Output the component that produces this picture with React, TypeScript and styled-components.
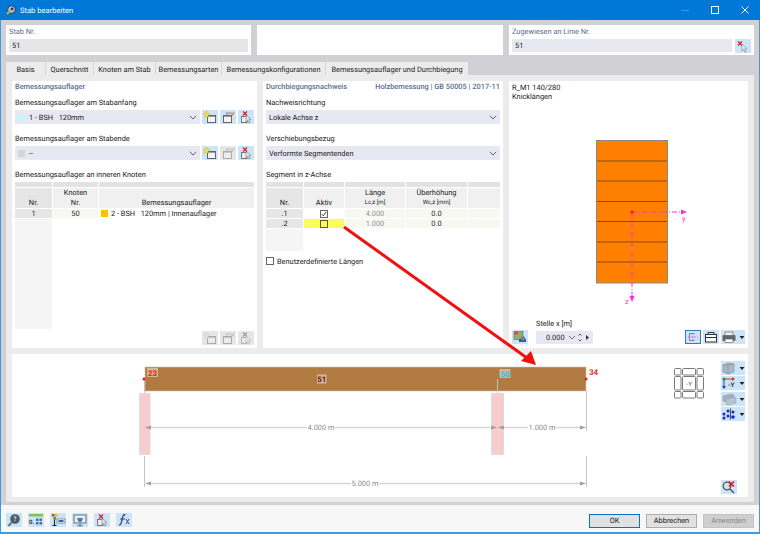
import React from 'react';
import styled, { createGlobalStyle, css } from 'styled-components';

const GlobalStyle = createGlobalStyle`
  html, body { margin: 0; padding: 0; background: #fff; overflow: hidden; }
  * { box-sizing: border-box; }
`;

const FONT = `Roboto, 'Noto Sans', 'Liberation Sans', sans-serif`;

const Window = styled.div`
  position: relative;
  width: 760px;
  height: 534px;
  display: flex;
  flex-direction: column;
  border: 1px solid #3f9be0;
  border-top: 0;
  border-bottom-width: 2px;
  font-family: ${FONT};
  font-size: 7.4px;
  text-rendering: geometricPrecision;
  color: #222;
  background: #f7f7f7;
`;

const TitleBar = styled.div`
  height: 20px;
  flex: none;
  margin: 0 -1px;
  padding: 0 0 0 6px;
  display: flex;
  align-items: center;
  gap: 4px;
  background: #0078d7;
  color: #fff;
  font-size: 7.6px;
`;

const WindowControls = styled.div`
  margin-left: auto;
  display: flex;
  align-items: center;
  height: 100%;
`;

const WindowControl = styled.span`
  width: 30px;
  height: 100%;
  display: flex;
  align-items: center;
  justify-content: center;
`;

const Main = styled.div`
  height: 485px;
  flex: none;
  padding: 5px 5px 3px;
  display: flex;
  flex-direction: column;
  background: #d1d1d5;
`;

const HeaderRow = styled.div`
  display: grid;
  grid-template-columns: 245px 246px 245px;
  column-gap: 6px;
  height: 30px;
  margin-bottom: 7px;
`;

const HeaderCard = styled.div`
  background: #fff;
  padding: 1px 3px 0;
`;

const HeaderLabel = styled.div`
  color: #5b6c8e;
  line-height: 12px;
  height: 13px;
`;

const HeaderFieldRow = styled.div`
  display: flex;
  gap: 3px;
`;

const HeaderField = styled.div<{ $disabled?: boolean }>`
  flex: 1;
  height: 13px;
  line-height: 13px;
  padding-left: 3px;
  background: ${(p) => (p.$disabled ? '#e6e6e6' : '#e8e8f2')};
`;

const TabStrip = styled.div`
  height: 13px;
  display: flex;
  align-items: flex-start;
`;

const Tab = styled.div<{ $width: number; $active?: boolean }>`
  width: ${(p) => p.$width}px;
  height: 13px;
  line-height: 15px;
  text-align: center;
  white-space: nowrap;
  background: #ececec;
  color: #222;
  ${(p) =>
    !p.$active &&
    css`
      border-right: 1px solid #d9d9dc;
    `}
`;

const Frame = styled.div`
  height: 427px;
  flex: none;
  padding: 6px;
  display: flex;
  flex-direction: column;
  gap: 6px;
  background: #ececec;
`;

const TopRow = styled.div`
  height: 267px;
  flex: none;
  display: grid;
  grid-template-columns: 245px 240px 239px;
  column-gap: 6px;
`;

const Panel = styled.div`
  background: #fff;
  padding: 0 3px;
  display: flex;
  flex-direction: column;
  min-width: 0;
`;

const PanelTitleRow = styled.div`
  height: 12px;
  line-height: 12px;
  display: flex;
  justify-content: space-between;
  white-space: nowrap;
  color: #5b6c8e;
  font-weight: 500;
`;

const FieldLabel = styled.div<{ $first?: boolean }>`
  height: 12px;
  line-height: 12px;
  margin-top: ${(p) => (p.$first ? 4 : 9)}px;
  margin-bottom: 1px;
`;

const SelectRow = styled.div`
  display: flex;
  gap: 2px;
`;

const Select = styled.div`
  flex: 1;
  height: 14px;
  display: flex;
  align-items: center;
  gap: 4px;
  padding: 0 3px;
  background: #e8e8f2;
`;

const Swatch = styled.span<{ $color: string }>`
  width: 7px;
  height: 7px;
  flex: none;
  background: ${(p) => p.$color};
`;

const SelectText = styled.span`
  flex: 1;
  white-space: pre;
`;

const IconButton = styled.div<{ $disabled?: boolean; $wide?: boolean; $selected?: boolean }>`
  width: ${(p) => (p.$wide ? 24 : 16)}px;
  height: 14px;
  flex: none;
  display: flex;
  align-items: center;
  justify-content: ${(p) => (p.$wide ? 'flex-start' : 'center')};
  background: ${(p) => (p.$disabled ? '#e6e6e6' : '#cce4f7')};
  ${(p) =>
    p.$selected &&
    css`
      outline: 1px solid #2f7cb8;
      outline-offset: -1px;
    `}
  ${(p) =>
    p.$disabled &&
    css`
      svg {
        filter: grayscale(1) opacity(0.45);
      }
    `}
`;

const TableGrid = styled.div<{ $columns: string }>`
  display: grid;
  grid-template-columns: ${(p) => p.$columns};
  grid-auto-rows: min-content;
  gap: 1px;
`;

const TopCell = styled.div`
  height: 5px;
  background: #e2e2e2;
`;

const HeadCell = styled.div<{ $stub?: boolean }>`
  height: 20px;
  display: flex;
  flex-direction: column;
  align-items: center;
  justify-content: flex-end;
  line-height: 10px;
  background: ${(p) => (p.$stub ? '#e6e6e6' : '#f0f0f0')};
`;

const SmallUnit = styled.span`
  font-size: 6px;
`;

const BodyCell = styled.div<{ $tone?: 'stub' | 'readonly' | 'white' | 'yellow'; $muted?: boolean; $left?: boolean }>`
  height: 9px;
  line-height: 9px;
  display: flex;
  align-items: center;
  justify-content: ${(p) => (p.$left ? 'flex-start' : 'center')};
  gap: 3px;
  padding-left: ${(p) => (p.$left ? 2 : 0)}px;
  white-space: pre;
  color: ${(p) => (p.$muted ? '#8f8f8f' : '#222')};
  background: ${(p) =>
    p.$tone === 'stub'
      ? '#e6e6e6'
      : p.$tone === 'yellow'
      ? '#fbfb5a'
      : p.$tone === 'readonly'
      ? '#f8f8f3'
      : '#fff'};
`;

const StubFiller = styled.div<{ $height: number }>`
  height: ${(p) => p.$height}px;
  background: #f5f5f5;
`;

const CheckBox = styled.span<{ $dark?: boolean }>`
  width: 8px;
  height: 8px;
  flex: none;
  display: inline-flex;
  border: 1px solid ${(p) => (p.$dark ? '#5c5c2a' : '#666')};
`;

const CheckRow = styled.div`
  display: flex;
  align-items: center;
  gap: 3px;
  margin-top: 4px;
  height: 12px;
`;

const BottomTools = styled.div`
  margin-top: auto;
  margin-bottom: 3px;
  display: flex;
  justify-content: flex-end;
  gap: 2px;
`;

const SectionHeading = styled.div`
  margin-top: 3px;
  line-height: 8.5px;
  color: #222;
`;

const SectionDrawing = styled.svg`
  display: block;
  width: 239px;
  height: 214px;
  margin: 3px -3px 0;
  flex: none;
`;

const SectionFooter = styled.div`
  display: flex;
  align-items: flex-end;
  gap: 8px;
`;

const StelleBox = styled.div`
  width: 57px;
`;

const StelleLabel = styled.div`
  height: 13px;
  line-height: 12px;
`;

const Spinner = styled.div`
  height: 13px;
  display: flex;
  align-items: center;
  padding-left: 10px;
  background: #e8e8f2;
`;

const SectionTools = styled.div`
  margin-left: auto;
  display: flex;
  gap: 2px;
`;

const DiagramPanel = styled.div`
  position: relative;
  height: 143px;
  flex: none;
  background: #fff;
`;

const DiagramCanvas = styled.svg`
  display: block;
  width: 736px;
  height: 143px;
`;

const ViewTools = styled.div`
  position: absolute;
  top: 7px;
  right: 3px;
  display: flex;
  flex-direction: column;
  gap: 1.3px;
`;

const ClearTool = styled.div`
  position: absolute;
  right: 11px;
  bottom: 3px;
`;

const Footer = styled.div`
  flex: 1;
  display: flex;
  align-items: flex-start;
  padding: 8px 0 0 5px;
`;

const FooterTools = styled.div`
  display: flex;
  gap: 6px;
`;

const FooterButtons = styled.div`
  margin-left: auto;
  margin-right: 5px;
  margin-top: 1px;
  display: flex;
  gap: 6px;
`;

const DialogButton = styled.div<{ $variant?: 'primary' | 'disabled' }>`
  width: 51px;
  height: 14px;
  line-height: 12px;
  text-align: center;
  background: ${(p) => (p.$variant === 'disabled' ? '#cfcfcf' : '#e1e1e1')};
  color: ${(p) => (p.$variant === 'disabled' ? '#8a8a8a' : '#222')};
  border: 1px solid
    ${(p) => (p.$variant === 'primary' ? '#0a72c4' : p.$variant === 'disabled' ? '#c4c4c4' : '#adadad')};
`;

const ArrowOverlay = styled.svg`
  position: absolute;
  left: -1px;
  top: 0;
  width: 760px;
  height: 534px;
  pointer-events: none;
`;

const Icon: React.FC<{ children: React.ReactNode; w?: number }> = ({ children, w = 16 }) => (
  <svg width={w} height={14} viewBox={`0 0 ${w} 14`}>
    {children}
  </svg>
);

const Dropdown = () => <path d="M18.5 6h5l-2.5 3z" fill="#222" />;

const NewIcon = () => (
  <Icon>
    <rect x="5.500" y="5.500" width="8" height="7" fill="#f4f4f4" stroke="#666" />
    <rect x="5" y="5" width="9" height="1.600" fill="#666" />
    <path d="M4.5 1l1 2.2 2.3.3-1.7 1.6.5 2.3-2.1-1.2-2.1 1.2.5-2.3L1.2 3.500l2.3-.3z" fill="#f5e23a" stroke="#b9a520" strokeWidth=".4" />
  </Icon>
);

const EditIcon = () => (
  <Icon>
    <rect x="3.500" y="5.500" width="8" height="7" fill="#f4f4f4" stroke="#666" />
    <rect x="3" y="5" width="9" height="1.600" fill="#666" />
    <path d="M6 3h6M7 3v2" stroke="#777" strokeWidth=".8" />
    <path d="M11 5l2.500-3 1.200 1-2.500 3z" fill="#c98a4a" />
  </Icon>
);

const DeleteIcon = () => (
  <Icon>
    <rect x="3.500" y="6.500" width="5.500" height="6" fill="#eee" stroke="#777" />
    <path d="M8 5l5 4.500-2.200.3 1.200 2.400-1.200.6-1.200-2.400-1.600 1.500z" fill="#e8e8e8" stroke="#777" strokeWidth=".6" />
    <path d="M5 1.500l4 4M9 1.500l-4 4" stroke="#d8202a" strokeWidth="1.200" />
  </Icon>
);

const PickIcon = () => (
  <Icon>
    <path d="M3 2.500l4 4M7 2.500l-4 4" stroke="#d8202a" strokeWidth="1.300" />
    <path d="M7 5l5 4.600-2.300.3 1.400 2.600-1.300.6-1.300-2.700-1.600 1.600z" fill="#e9e9e9" stroke="#888" strokeWidth=".6" />
  </Icon>
);

const RenderSettingsIcon = () => (
  <Icon>
    <rect x="2" y="1.500" width="9" height="8" fill="#8fb06c" stroke="#666" strokeWidth=".6" />
    <rect x="2" y="1.500" width="4" height="3" fill="#c9573e" />
    <path d="M7 9h7v3H7z" fill="#2c5f9a" />
    <circle cx="11" cy="8.500" r="2.200" fill="#6a7e96" />
  </Icon>
);

const SectionViewIcon = () => (
  <Icon>
    <path d="M4.500 3.500h5M4.500 3.500v7M4.500 10.500h5" fill="none" stroke="#8a5a70" strokeWidth=".8" />
    <path d="M3 7h10M8 3v8" stroke="#e04fc0" strokeWidth=".7" strokeDasharray="2 1" />
  </Icon>
);

const TableIcon = () => (
  <Icon>
    <rect x="2.500" y="4.500" width="11" height="7.500" fill="#fff" stroke="#333" />
    <path d="M5 4.500V2.500h6v2" fill="none" stroke="#333" />
    <path d="M2.500 7.500h11" stroke="#333" />
  </Icon>
);

const PrintIcon = () => (
  <Icon w={24}>
    <rect x="1.500" y="5" width="13" height="6" rx="1" fill="#666" />
    <rect x="4" y="2" width="8" height="3.500" fill="#eee" stroke="#555" strokeWidth=".6" />
    <rect x="4" y="9" width="8" height="3.500" fill="#fff" stroke="#555" strokeWidth=".6" />
    <Dropdown />
  </Icon>
);

const BoxViewIcon = () => (
  <Icon w={24}>
    <path d="M2 4l5-2 6 1v8l-6 2-5-2z" fill="#a9b7c6" stroke="#7d8b99" strokeWidth=".6" />
    <path d="M7 4v9M2 4l5 0 6-1" stroke="#7d8b99" strokeWidth=".6" fill="none" />
    <Dropdown />
  </Icon>
);

const AxesIcon = () => (
  <Icon w={24}>
    <circle cx="3" cy="3" r="1.600" fill="#2a9a3a" />
    <path d="M3 3h9" stroke="#c8342a" strokeWidth="1" />
    <path d="M11 1l3 2-3 2z" fill="#c8342a" />
    <path d="M3 4v7" stroke="#1c3fc0" strokeWidth="1" />
    <path d="M1 10l2 3 2-3z" fill="#1c3fc0" />
    <text x="7" y="11" fontSize="6.500" fontWeight="700" fill="#333" fontFamily={FONT}>-Y</text>
    <Dropdown />
  </Icon>
);

const LayersIcon = () => (
  <Icon w={24}>
    <path d="M2 4l8-2 3 1v5l-8 2-3-1z" fill="#a3b1bf" stroke="#8c99a6" strokeWidth=".5" />
    <path d="M5 7l8-2 2 1v5l-8 2-2-1z" fill="#b7c3cf" stroke="#8c99a6" strokeWidth=".5" />
    <Dropdown />
  </Icon>
);

const LoadsIcon = () => (
  <Icon w={24}>
    <g fill="#1428c8">
      <circle cx="3" cy="7" r="1.500" />
      <circle cx="3" cy="11" r="1.500" />
      <circle cx="7" cy="4" r="1.500" />
      <circle cx="7" cy="9" r="1.500" />
      <circle cx="12" cy="5" r="1.500" />
      <circle cx="12" cy="10" r="1.800" />
    </g>
    <path d="M9.500 1.500v11" stroke="#555" strokeWidth="1.200" />
    <Dropdown />
  </Icon>
);

const ClearIcon = () => (
  <Icon>
    <circle cx="6" cy="6" r="3.800" fill="none" stroke="#555" strokeWidth="1.300" />
    <path d="M9 9l4 4" stroke="#555" strokeWidth="1.400" />
    <path d="M8 1.500l5 5M13 1.500l-5 5" stroke="#e01020" strokeWidth="1.500" />
  </Icon>
);

const HelpIcon = () => (
  <Icon>
    <circle cx="9" cy="6" r="4.800" fill="#4a5c6a" />
    <path d="M5.500 9.500L2.500 13" stroke="#4a5c6a" strokeWidth="1.800" />
    <text x="7.300" y="8.300" fontSize="6.500" fill="#dfe8ef" fontWeight="700" fontFamily={FONT}>?</text>
  </Icon>
);

const ValuesIcon = () => (
  <Icon>
    <rect x="1" y="1" width="14" height="2.500" fill="#7cc35e" />
    <text x="1" y="11" fontSize="6" fontWeight="700" fill="#333" fontFamily={FONT}>0.</text>
    <rect x="8" y="5.500" width="2.500" height="2.500" fill="#3f6fb0" />
    <rect x="11.500" y="5.500" width="2.500" height="2.500" fill="#3f6fb0" />
    <rect x="8" y="9" width="2.500" height="2.500" fill="#3f6fb0" />
    <rect x="11.500" y="9" width="2.500" height="2.500" fill="#3f6fb0" />
  </Icon>
);

const ObjectsIcon = () => (
  <Icon>
    <rect x="2" y="1" width="2.500" height="2.500" fill="#d83a2a" />
    <rect x="5" y="1" width="2.500" height="2.500" fill="#e0c020" />
    <rect x="3.500" y="4" width="2.500" height="2.500" fill="#3aa040" />
    <path d="M4.500 6.500v6M2.500 12.500h4" stroke="#222" strokeWidth="1.100" />
    <rect x="7" y="6" width="8" height="4" fill="#fff" stroke="#555" strokeWidth=".6" />
    <rect x="8.500" y="7" width="5" height="2" fill="#2f66c0" />
  </Icon>
);

const ScreenIcon = () => (
  <Icon>
    <rect x="2" y="2" width="12" height="8" fill="#e4ecf3" stroke="#6a7682" />
    <path d="M5 5h6l-1.500 4h-3z" fill="#4a7fb4" />
    <path d="M8 10v2.500M5.500 12.800h5" stroke="#5a6672" strokeWidth="1" />
  </Icon>
);

const FormulaIcon = () => (
  <Icon>
    <path d="M3 12c2 0 2-1 3-5s1-5.500 3.500-5.500" fill="none" stroke="#3a4a66" strokeWidth="1.300" />
    <path d="M4 6h5" stroke="#3a4a66" strokeWidth="1" />
    <path d="M10 6l3 5M13 6l-3 5" stroke="#3a4a66" strokeWidth="1" />
  </Icon>
);

const Chevron = () => (
  <svg width="8" height="5" viewBox="0 0 8 5">
    <path d="M.8.8L4 4 7.200.8" fill="none" stroke="#555" strokeWidth=".9" />
  </svg>
);

const SectionSvg = () => (
  <SectionDrawing viewBox="509 104 239 214">
    <rect x="596.500" y="140.500" width="71" height="142.500" fill="#ff8000" stroke="#8a8a8a" strokeWidth="1" />
    {[161, 181, 201.500, 221.500, 242, 262].map((y) => (
      <line key={y} x1="597" x2="667" y1={y} y2={y} stroke="#8a4a08" strokeWidth="1.200" />
    ))}
    <g stroke="#ff2ee0" strokeWidth="1" strokeDasharray="5 2 1 2" fill="none">
      <path d="M632 212H682" />
      <path d="M632 212V298" />
    </g>
    <path d="M681 209.500l6 2.500-6 2.500z" fill="#ff2ee0" />
    <path d="M629.500 296l2.500 6 2.500-6z" fill="#ff2ee0" />
    <circle cx="632" cy="212" r="1.500" fill="#ff1010" />
    <text x="682" y="221" fontSize="7.500" fill="#ff2ee0" fontFamily={FONT}>y</text>
    <text x="625" y="304" fontSize="7.500" fill="#ff2ee0" fontFamily={FONT}>z</text>
  </SectionDrawing>
);

const cubeCells: [number, number, number, number][] = [
  [674.500, 368.500, 6.500, 6.500],
  [682.500, 368.500, 13, 6.500],
  [697, 368.500, 6.500, 6.500],
  [674.500, 376.500, 6.500, 13.500],
  [682.500, 376.500, 13, 13.500],
  [697, 376.500, 6.500, 13.500],
  [674.500, 391.500, 6.500, 6.500],
  [682.500, 391.500, 13, 6.500],
  [697, 391.500, 6.500, 6.500],
];

const DimLabel: React.FC<{ x: number; y: number; children: React.ReactNode }> = ({ x, y, children }) => (
  <text x={x} y={y} fontSize="7.400" fill="#8a8a8a" textAnchor="middle" fontFamily={FONT}>
    {children}
  </text>
);

const DiagramSvg = () => (
  <DiagramCanvas viewBox="12 354 736 143">
    <rect x="145" y="367" width="441" height="24" fill="#b07a40" stroke="#d8c4a8" strokeWidth=".6" />

    <g stroke="#c4c4c4" strokeWidth="1">
      <line x1="144.500" x2="144.500" y1="379" y2="428" />
      <line x1="144.500" x2="144.500" y1="456" y2="487" />
      <line x1="586.500" x2="586.500" y1="391" y2="431" />
      <line x1="586.500" x2="586.500" y1="456" y2="487" />
      <line x1="497.500" x2="497.500" y1="379" y2="431" />
    </g>

    <rect x="139.500" y="393.500" width="10.500" height="61" fill="#f7cccc" stroke="#e0dcdc" />
    <rect x="491.500" y="393.500" width="12" height="61" fill="#f7cccc" stroke="#e0dcdc" />

    <g stroke="#d6d6d6" strokeWidth="1.500">
      <line x1="150" x2="307" y1="427.500" y2="427.500" />
      <line x1="335" x2="490" y1="427.500" y2="427.500" />
      <line x1="503" x2="528" y1="427.500" y2="427.500" />
      <line x1="556" x2="582" y1="427.500" y2="427.500" />
      <line x1="150" x2="351" y1="483.500" y2="483.500" />
      <line x1="379" x2="582" y1="483.500" y2="483.500" />
    </g>
    <g fill="#a0a0a0">
      <path d="M145 427.500l6-2v4z" />
      <path d="M497 427.500l-6-2v4z" />
      <path d="M498 427.500l6-2v4z" />
      <path d="M586 427.500l-6-2v4z" />
      <path d="M145 483.500l6-2v4z" />
      <path d="M586 483.500l-6-2v4z" />
    </g>
    <DimLabel x={321} y={430}>4.000 m</DimLabel>
    <DimLabel x={542} y={430}>1.000 m</DimLabel>
    <DimLabel x={365} y={486}>5.000 m</DimLabel>

    <circle cx="144" cy="379" r="1.500" fill="#f01818" />
    <circle cx="586" cy="379" r="1.500" fill="#f01818" />

    <rect x="147" y="368" width="11" height="9" fill="#d5b697" />
    <text x="152.500" y="375.500" fontSize="7.800" fontWeight="700" textAnchor="middle" fill="#e01818" fontFamily={FONT}>23</text>
    <rect x="317" y="374.500" width="9.500" height="9" fill="#d5b697" />
    <text x="321.800" y="382" fontSize="7.800" fontWeight="700" textAnchor="middle" fill="#5a1010" fontFamily={FONT}>51</text>
    <rect x="499.500" y="369" width="11" height="9" fill="#d5b697" />
    <text x="505" y="376.500" fontSize="7.800" fontWeight="700" textAnchor="middle" fill="#1cc0f0" fontFamily={FONT}>50</text>
    <text x="593.500" y="374.500" fontSize="8" fontWeight="700" textAnchor="middle" fill="#e83030" fontFamily={FONT}>34</text>

    {cubeCells.map(([x, y, w, h]) => (
      <rect key={`${x}-${y}`} x={x} y={y} width={w} height={h} rx="1" fill="none" stroke="#7a7a7a" strokeWidth="1" />
    ))}
    <text x="689" y="386" fontSize="6" fontWeight="700" textAnchor="middle" fill="#49a862" fontFamily={FONT}>-Y</text>
  </DiagramCanvas>
);

const App: React.FC = () => {
  return (
    <Window>
      <GlobalStyle />
      <TitleBar>
        <svg width="10" height="10" viewBox="0 0 10 10">
          <circle cx="5.500" cy="4.500" r="3.800" fill="#b7c4d4" stroke="#2c3e58" strokeWidth="1" />
          <path d="M1 9l3-3" stroke="#e0b030" strokeWidth="1.800" />
          <circle cx="6" cy="4" r="1.400" fill="#2c3e58" />
        </svg>
        Stab bearbeiten
        <WindowControls>
          <WindowControl>
            <svg width="10" height="10" viewBox="0 0 10 10"><path d="M1 5.500h8" stroke="#3a97e2" /></svg>
          </WindowControl>
          <WindowControl>
            <svg width="10" height="10" viewBox="0 0 10 10"><rect x="1.500" y="1.500" width="7" height="7" fill="none" stroke="#fff" /></svg>
          </WindowControl>
          <WindowControl>
            <svg width="10" height="10" viewBox="0 0 10 10"><path d="M1.500 1.500l7 7M8.500 1.500l-7 7" stroke="#fff" /></svg>
          </WindowControl>
        </WindowControls>
      </TitleBar>

      <Main>
        <HeaderRow>
          <HeaderCard>
            <HeaderLabel>Stab Nr.</HeaderLabel>
            <HeaderField $disabled>51</HeaderField>
          </HeaderCard>
          <HeaderCard />
          <HeaderCard>
            <HeaderLabel>Zugewiesen an Linie Nr.</HeaderLabel>
            <HeaderFieldRow>
              <HeaderField>51</HeaderField>
              <IconButton><PickIcon /></IconButton>
            </HeaderFieldRow>
          </HeaderCard>
        </HeaderRow>

        <TabStrip>
          <Tab $width={40}>Basis</Tab>
          <Tab $width={48}>Querschnitt</Tab>
          <Tab $width={62}>Knoten am Stab</Tab>
          <Tab $width={66}>Bemessungsarten</Tab>
          <Tab $width={104}>Bemessungskonfigurationen</Tab>
          <Tab $width={142} $active>Bemessungsauflager und Durchbiegung</Tab>
        </TabStrip>

        <Frame>
          <TopRow>
            <Panel>
              <PanelTitleRow>Bemessungsauflager</PanelTitleRow>
              <FieldLabel $first>Bemessungsauflager am Stabanfang</FieldLabel>
              <SelectRow>
                <Select>
                  <Swatch $color="#c4f6fb" />
                  <SelectText>1 - BSH   120mm</SelectText>
                  <Chevron />
                </Select>
                <IconButton><NewIcon /></IconButton>
                <IconButton><EditIcon /></IconButton>
                <IconButton><DeleteIcon /></IconButton>
              </SelectRow>
              <FieldLabel>Bemessungsauflager am Stabende</FieldLabel>
              <SelectRow>
                <Select>
                  <Swatch $color="#d6d6d6" />
                  <SelectText>--</SelectText>
                  <Chevron />
                </Select>
                <IconButton><NewIcon /></IconButton>
                <IconButton $disabled><EditIcon /></IconButton>
                <IconButton><DeleteIcon /></IconButton>
              </SelectRow>
              <FieldLabel>Bemessungsauflager an inneren Knoten</FieldLabel>
              <TableGrid $columns="37px 45px 1fr">
                <TopCell /><TopCell /><TopCell />
                <HeadCell $stub>Nr.</HeadCell>
                <HeadCell>Knoten<span>Nr.</span></HeadCell>
                <HeadCell>Bemessungsauflager</HeadCell>
                <BodyCell $tone="stub">1</BodyCell>
                <BodyCell $tone="readonly">50</BodyCell>
                <BodyCell $left>
                  <Swatch $color="#ffc000" />
                  <span>2 - BSH   120mm | Innenauflager</span>
                </BodyCell>
                <StubFiller $height={110} />
              </TableGrid>
              <BottomTools>
                <IconButton $disabled><NewIcon /></IconButton>
                <IconButton $disabled><EditIcon /></IconButton>
                <IconButton $disabled><DeleteIcon /></IconButton>
              </BottomTools>
            </Panel>

            <Panel>
              <PanelTitleRow>
                <span>Durchbiegungsnachweis</span>
                <span>Holzbemessung | GB 50005 | 2017-11</span>
              </PanelTitleRow>
              <FieldLabel $first>Nachweisrichtung</FieldLabel>
              <SelectRow>
                <Select>
                  <SelectText>Lokale Achse z</SelectText>
                  <Chevron />
                </Select>
              </SelectRow>
              <FieldLabel>Verschiebungsbezug</FieldLabel>
              <SelectRow>
                <Select>
                  <SelectText>Verformte Segmentenden</SelectText>
                  <Chevron />
                </Select>
              </SelectRow>
              <FieldLabel>Segment in z-Achse</FieldLabel>
              <TableGrid $columns="37px 40px 60px 61px 1fr">
                <TopCell /><TopCell /><TopCell /><TopCell /><TopCell />
                <HeadCell $stub>Nr.</HeadCell>
                <HeadCell>Aktiv</HeadCell>
                <HeadCell>Länge<SmallUnit>Lc,z [m]</SmallUnit></HeadCell>
                <HeadCell>Überhöhung<SmallUnit>Wc,z [mm]</SmallUnit></HeadCell>
                <HeadCell />

                <BodyCell $tone="stub">.1</BodyCell>
                <BodyCell $tone="white">
                  <CheckBox>
                    <svg width="6" height="6" viewBox="0 0 6 6"><path d="M.6 3l1.700 1.800L5.400.8" fill="none" stroke="#333" strokeWidth=".9" /></svg>
                  </CheckBox>
                </BodyCell>
                <BodyCell $tone="readonly" $muted>4.000</BodyCell>
                <BodyCell $tone="readonly">0.0</BodyCell>
                <BodyCell $tone="readonly" />

                <BodyCell $tone="stub">.2</BodyCell>
                <BodyCell $tone="yellow"><CheckBox $dark /></BodyCell>
                <BodyCell $tone="readonly" $muted>1.000</BodyCell>
                <BodyCell $tone="readonly">0.0</BodyCell>
                <BodyCell $tone="readonly" />

                <StubFiller $height={22} />
              </TableGrid>
              <CheckRow>
                <CheckBox />
                Benutzerdefinierte Längen
              </CheckRow>
            </Panel>

            <Panel>
              <SectionHeading>
                R_M1 140/280
                <br />
                Knicklängen
              </SectionHeading>
              <SectionSvg />
              <SectionFooter>
                <IconButton><RenderSettingsIcon /></IconButton>
                <StelleBox>
                  <StelleLabel>Stelle x [m]</StelleLabel>
                  <Spinner>
                    <span>0.000</span>
                    <svg width="27" height="13" viewBox="0 0 27 13">
                      <path d="M4 5l3 3 3-3" fill="none" stroke="#555" strokeWidth=".8" />
                      <path d="M13.500 4.500l1.500-1.500 1.500 1.500M13.500 8.500l1.500 1.500 1.500-1.500" fill="none" stroke="#333" strokeWidth=".8" />
                      <path d="M21 4l3 2.500-3 2.500z" fill="#333" />
                    </svg>
                  </Spinner>
                </StelleBox>
                <SectionTools>
                  <IconButton $selected><SectionViewIcon /></IconButton>
                  <IconButton><TableIcon /></IconButton>
                  <IconButton $wide><PrintIcon /></IconButton>
                </SectionTools>
              </SectionFooter>
            </Panel>
          </TopRow>

          <DiagramPanel>
            <DiagramSvg />
            <ViewTools>
              <IconButton $wide><BoxViewIcon /></IconButton>
              <IconButton $wide><AxesIcon /></IconButton>
              <IconButton $wide><LayersIcon /></IconButton>
              <IconButton $wide><LoadsIcon /></IconButton>
            </ViewTools>
            <ClearTool>
              <IconButton><ClearIcon /></IconButton>
            </ClearTool>
          </DiagramPanel>
        </Frame>
      </Main>

      <Footer>
        <FooterTools>
          <IconButton><HelpIcon /></IconButton>
          <IconButton><ValuesIcon /></IconButton>
          <IconButton><ObjectsIcon /></IconButton>
          <IconButton><ScreenIcon /></IconButton>
          <IconButton><DeleteIcon /></IconButton>
          <IconButton><FormulaIcon /></IconButton>
        </FooterTools>
        <FooterButtons>
          <DialogButton $variant="primary">OK</DialogButton>
          <DialogButton>Abbrechen</DialogButton>
          <DialogButton $variant="disabled">Anwenden</DialogButton>
        </FooterButtons>
      </Footer>

      <ArrowOverlay viewBox="0 0 760 534">
        <line x1="344" y1="227" x2="527" y2="358" stroke="#f01010" strokeWidth="3" />
        <path d="M536 365L521 361L531 351z" fill="#f01010" />
      </ArrowOverlay>
    </Window>
  );
};

export default App;
